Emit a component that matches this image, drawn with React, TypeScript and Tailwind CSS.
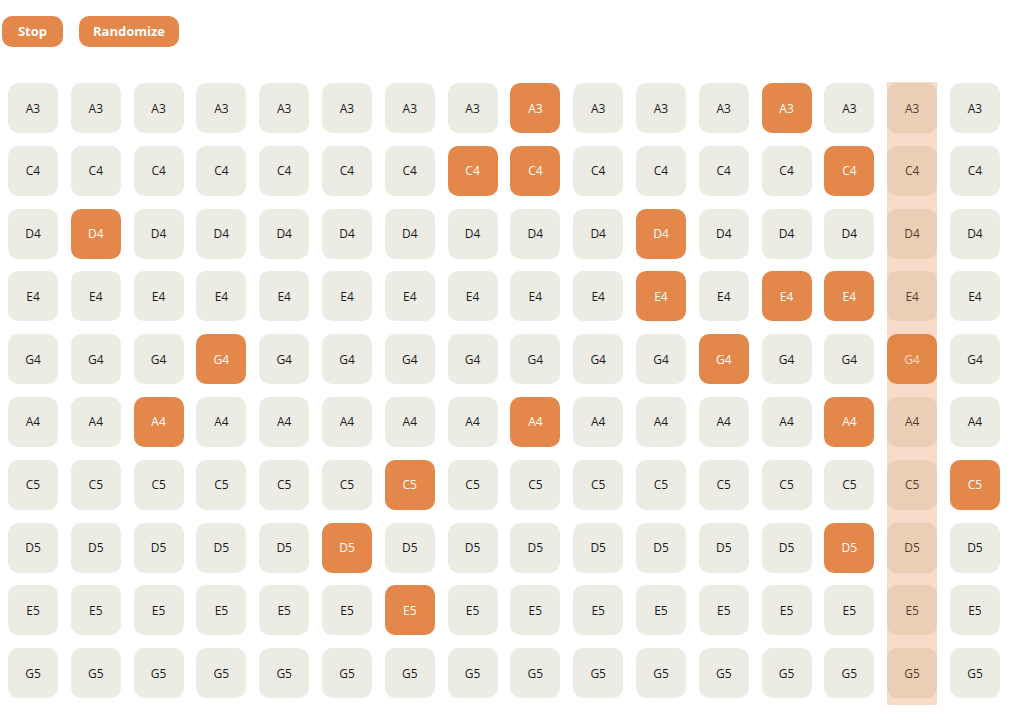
import React, { useState } from 'react';

const NOTES = ['A3', 'C4', 'D4', 'E4', 'G4', 'A4', 'C5', 'D5', 'E5', 'G5'];
const STEPS = 16;

// active steps per note row
const initialPattern: number[][] = [
  [8, 12],
  [7, 8, 13],
  [1, 10],
  [10, 12, 13],
  [3, 11, 14],
  [2, 8, 13],
  [6, 15],
  [5, 13],
  [6],
  [],
];

function Cell({ note, active, onToggle }: { note: string; active: boolean; onToggle: () => void }) {
  return (
    <button
      onClick={onToggle}
      className={`w-[50px] h-[50px] pt-px rounded-[10px] flex items-center justify-center text-[12px] ${
        active ? 'bg-[#e3874a] text-white' : 'bg-[#edece4] text-[#1c1c1c]'
      }`}
    >
      {note}
    </button>
  );
}

export default function App() {
  const [pattern, setPattern] = useState<boolean[][]>(() =>
    NOTES.map((_, r) => Array.from({ length: STEPS }, (_, c) => initialPattern[r].includes(c)))
  );
  const [playing, setPlaying] = useState(true);
  const current = 14;

  const toggle = (r: number, c: number) =>
    setPattern((p) => p.map((row, ri) => (ri === r ? row.map((v, ci) => (ci === c ? !v : v)) : row)));

  const randomize = () =>
    setPattern(NOTES.map(() => Array.from({ length: STEPS }, () => Math.random() < 0.18)));

  return (
    <div className="min-h-screen bg-white font-['Open_Sans',_'DejaVu_Sans',_sans-serif]">
      <div className="flex gap-4 pt-4 pl-[2px]">
        <button
          onClick={() => setPlaying(!playing)}
          className="w-[61px] h-[31px] pt-px rounded-[10px] bg-[#e3874a] text-white text-[13px] font-bold"
        >
          {playing ? 'Stop' : 'Play'}
        </button>
        <button
          onClick={randomize}
          className="w-[100px] h-[31px] pt-px rounded-[10px] bg-[#e3874a] text-white text-[13px] font-bold"
        >
          Randomize
        </button>
      </div>

      <div className="flex gap-x-[12.8px] mt-9 ml-2">
        {Array.from({ length: STEPS }, (_, c) => (
          <div key={c} className="relative flex flex-col gap-y-[12.8px]">
            {NOTES.map((note, r) => (
              <Cell key={note} note={note} active={pattern[r][c]} onToggle={() => toggle(r, c)} />
            ))}
            {playing && c === current && (
              <div className="absolute -top-[1px] -bottom-[7px] left-0 right-0 bg-[#e3874a]/30 pointer-events-none" />
            )}
          </div>
        ))}
      </div>
    </div>
  );
}
